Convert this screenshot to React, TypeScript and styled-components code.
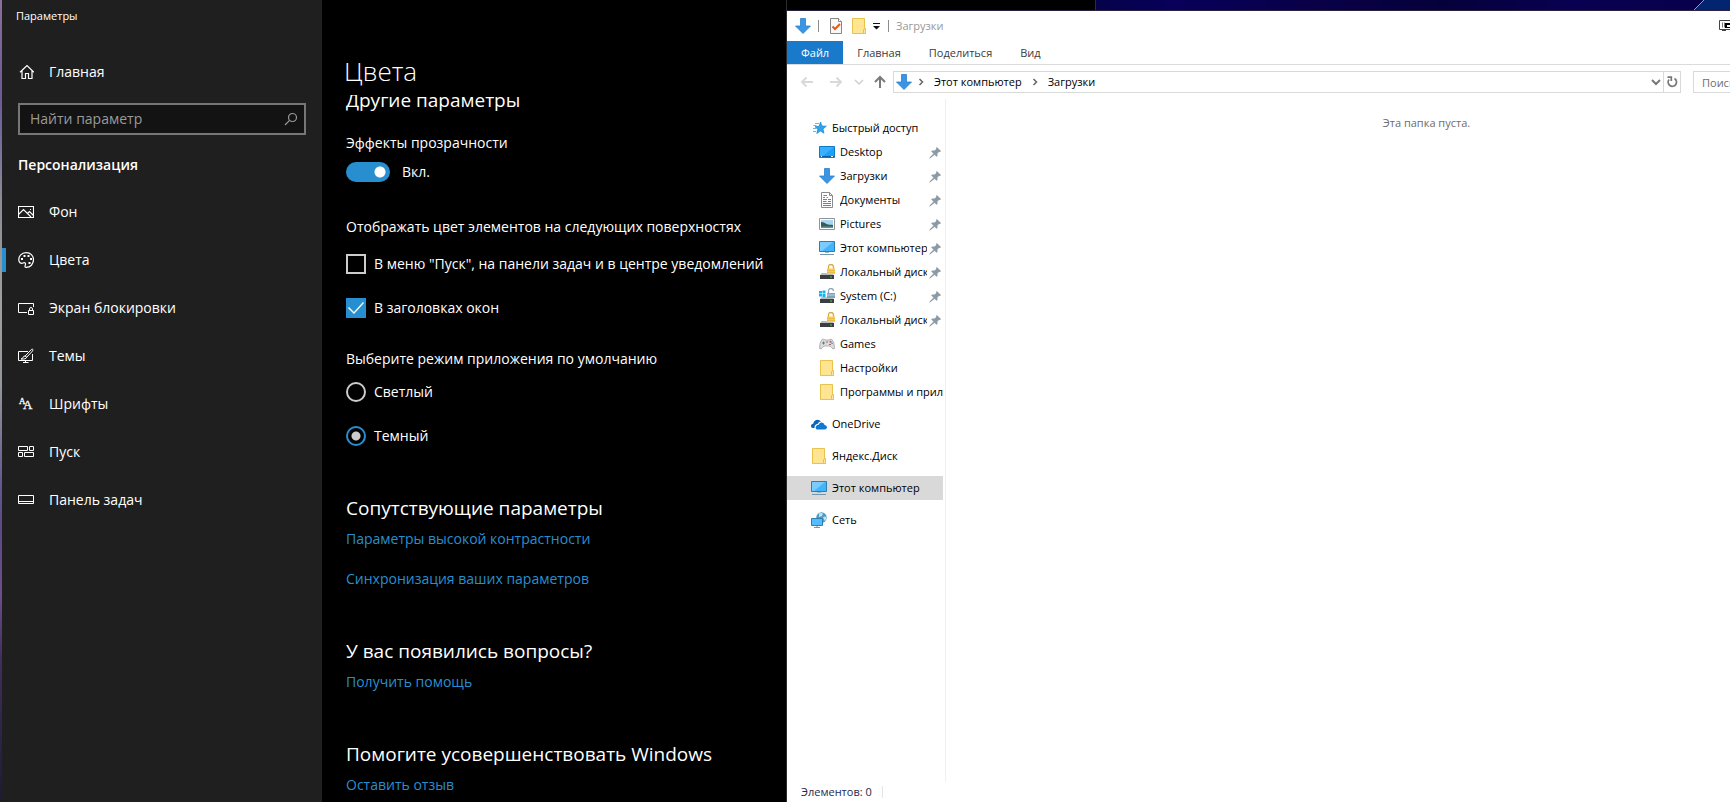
import React, { useState } from 'react';
import styled, { createGlobalStyle } from 'styled-components';

const accent = '#278fd0';

const GlobalStyle = createGlobalStyle`
  * { box-sizing: border-box; }
  body { margin: 0; overflow: hidden; background: #000; font-family: "Open Sans", "Noto Sans", sans-serif; }
  h1, h2, p, ul { margin: 0; padding: 0; font-weight: 400; }
  ul { list-style: none; }
  button, input { font: inherit; color: inherit; }
  button { border: 0; padding: 0; background: none; }
  svg { display: block; flex: none; }
`;

/* ---------- desktop ---------- */
const Desktop = styled.div`
  display: flex;
  height: 100vh;
  overflow: hidden;
`;
const WallpaperEdge = styled.div`
  flex: 0 0 2px;
  background: linear-gradient(#8a6f9c 0%, #6d5a94 12%, #77709c 18%, #8d8b93 25%, #a0a0a0 38%, #93979b 48%, #665a90 60%, #5a4a86 66%, #6e4f8e 74%, #40305c 82%, #1c1a33 100%);
`;
const RightSide = styled.div`
  flex: 1;
  min-width: 0;
  display: flex;
  flex-direction: column;
  overflow: hidden;
`;
const TopStrip = styled.div`
  flex: 0 0 10px;
  display: flex;
`;
const SettingsTop = styled.div`
  flex: 0 0 309px;
  background: #000;
  border-right: 1px solid #2b2b3b;
`;
const Wallpaper = styled.div`
  flex: 1;
  display: flex;
  justify-content: flex-end;
  background: linear-gradient(90deg, #04024a 0%, #08005a 12%, #090047 35%, #06003a 55%, #0a0052 75%, #08004a 100%);
`;

/* ---------- settings ---------- */
const Settings = styled.div`
  flex: 0 0 785px;
  display: flex;
  color: #fff;
  font-size: 14px;
  line-height: 20px;
`;
const Sidebar = styled.aside`
  flex: 0 0 320px;
  background: #1f1f1f;
`;
const WindowName = styled.p`
  padding: 6px 14px 0;
  font-size: 11px;
`;
const HomeLink = styled.a`
  display: flex;
  align-items: center;
  gap: 15px;
  height: 48px;
  margin-top: 22px;
  padding-left: 16px;
  color: inherit;
  text-decoration: none;
`;
const SearchBox = styled.label`
  display: flex;
  align-items: center;
  height: 32px;
  margin: 7px 16px 0;
  padding: 0 6px 0 10px;
  border: 2px solid #767676;
  background: #131313;
`;
const SearchInput = styled.input`
  flex: 1;
  min-width: 0;
  border: 0;
  padding: 0;
  outline: 0;
  background: none;
  &::placeholder { color: #9a9a9a; opacity: 1; }
`;
const Category = styled.h2`
  padding: 20px 16px 0;
  font-size: 14px;
  font-weight: 600;
`;
const NavList = styled.ul`
  padding-top: 13px;
`;
const NavLink = styled.a<{ $active?: boolean }>`
  display: flex;
  align-items: center;
  gap: 15px;
  height: 48px;
  padding-left: 16px;
  color: inherit;
  text-decoration: none;
  background: ${(p) => (p.$active ? `linear-gradient(${accent}, ${accent}) 0 12px / 4px 24px no-repeat` : 'none')};
`;
const Page = styled.main`
  flex: 1;
  min-width: 0;
  display: flex;
  flex-direction: column;
  background: #000;
  border-right: 1px solid #2b2b2b;
`;
const PageTitle = styled.h1`
  height: 95px;
  padding: 54px 22px 0;
  font-size: 26px;
  line-height: 34px;
  font-weight: 300;
`;
const ScrollArea = styled.div`
  flex: 1;
  min-height: 0;
  overflow: hidden;
`;
const Scrolled = styled.div`
  display: flex;
  flex-direction: column;
  gap: 50px;
  margin-top: -7px;
  padding-left: 24px;
`;
const Section = styled.section`
  display: flex;
  flex-direction: column;
  align-items: flex-start;
`;
const SectionTitle = styled.h2`
  font-size: 19px;
  line-height: 24px;
  white-space: nowrap;
`;
const Links = styled.div`
  display: flex;
  flex-direction: column;
  align-items: flex-start;
  gap: 20px;
  margin-top: 9px;
`;
const TextLink = styled.a`
  color: ${accent};
  text-decoration: none;
`;
const Caption = styled.p<{ $top: number }>`
  margin-top: ${(p) => p.$top}px;
  white-space: nowrap;
`;
const Options = styled.div<{ $top: number }>`
  display: flex;
  flex-direction: column;
  gap: 24px;
  margin-top: ${(p) => p.$top}px;
`;
const Option = styled.label<{ $gap?: number }>`
  display: flex;
  align-items: center;
  gap: ${(p) => p.$gap ?? 8}px;
  white-space: nowrap;
`;
const Toggle = styled.input`
  appearance: none;
  flex: none;
  width: 44px;
  height: 20px;
  margin: 0;
  border-radius: 10px;
  background: radial-gradient(circle at 34px 10px, #fff 5px, transparent 6px) ${accent};
  &:not(:checked) { background: radial-gradient(circle at 10px 10px, #fff 5px, transparent 6px) #333; }
`;
const CheckBox = styled.input`
  appearance: none;
  flex: none;
  display: grid;
  width: 20px;
  height: 20px;
  margin: 0;
  border: 2px solid #ccc;
  &:checked { border: 0; background: ${accent}; }
  &:checked::before {
    content: "";
    background: #fff;
    clip-path: polygon(2px 10px, 3px 9px, 8px 14px, 17px 4px, 18px 5px, 8px 16px);
  }
`;
const Radio = styled.input`
  appearance: none;
  flex: none;
  width: 20px;
  height: 20px;
  margin: 0;
  border: 2px solid #ccc;
  border-radius: 50%;
  &:checked {
    border-color: ${accent};
    background: radial-gradient(circle, #ccc 4px, transparent 5px);
  }
`;

/* ---------- explorer ---------- */
const Explorer = styled.div`
  flex: 1;
  min-height: 0;
  width: calc(100% + 177px);
  display: flex;
  flex-direction: column;
  border-top: 1px solid #2b2440;
  background: #fff;
  color: #000;
  font-size: 11px;
  line-height: 16px;
`;
const TitleBar = styled.header`
  display: flex;
  align-items: center;
  height: 30px;
  padding: 0 172px 0 8px;
`;
const Divider = styled.span`
  width: 1px;
  height: 12px;
  margin-left: 7px;
  background: #8c8c8c;
`;
const ToolButton = styled.button<{ $left: number }>`
  margin-left: ${(p) => p.$left}px;
`;
const ExplorerName = styled.h1`
  flex: 1;
  padding-left: 7px;
  font-size: 11px;
  line-height: 16px;
  color: #999;
`;
const Tabs = styled.nav`
  display: flex;
  height: 24px;
  border-bottom: 1px solid #dadbdc;
`;
const Tab = styled.button<{ $file?: boolean }>`
  padding: 0 14px;
  color: ${(p) => (p.$file ? '#fff' : '#3b3b3b')};
  background: ${(p) => (p.$file ? '#1979ca' : 'transparent')};
`;
const NavRow = styled.div`
  display: flex;
  align-items: center;
  height: 34px;
  padding: 0 12px;
`;
const NavButtons = styled.div`
  display: flex;
  align-items: center;
  width: 94px;
`;
const Address = styled.div`
  flex: 1;
  min-width: 0;
  display: flex;
  align-items: center;
  height: 22px;
  padding-left: 2px;
  border: 1px solid #d9d9d9;
`;
const Crumb = styled.button`
  padding: 0 8px;
`;
const AddressTools = styled.div`
  display: flex;
  align-items: center;
  align-self: stretch;
  margin-left: auto;
`;
const Refresh = styled.button`
  display: grid;
  place-items: center;
  width: 17px;
  height: 20px;
  margin-left: 2px;
  border-left: 1px solid #d9d9d9;
`;
const ExplorerSearch = styled.input`
  flex: 0 0 202px;
  height: 22px;
  margin-left: 12px;
  padding: 0 8px;
  border: 1px solid #d9d9d9;
  &::placeholder { color: #6d6d6d; opacity: 1; }
`;
const Body = styled.div`
  flex: 1;
  min-height: 0;
  display: flex;
`;
const Tree = styled.nav`
  flex: 0 0 159px;
  min-width: 0;
  display: flex;
  flex-direction: column;
  gap: 8px;
  padding: 17px 2px 0 0;
  border-right: 1px solid #f0f0f0;
`;
const TreeLink = styled.a<{ $level?: number; $selected?: boolean }>`
  display: flex;
  align-items: center;
  gap: 5px;
  height: 24px;
  padding-left: ${(p) => (p.$level ? 32 : 24)}px;
  color: inherit;
  text-decoration: none;
  background: ${(p) => (p.$selected ? '#d9d9d9' : 'transparent')};
`;
const TreeText = styled.span`
  flex: 1;
  min-width: 0;
  overflow: hidden;
  white-space: nowrap;
`;
const PinSlot = styled.span`
  flex: 0 0 16px;
  margin-left: -5px;
`;
const Files = styled.main`
  flex: 1;
  padding-top: 16px;
  text-align: center;
  color: #6d6d6d;
`;
const StatusBar = styled.footer`
  display: flex;
  align-items: center;
  gap: 10px;
  height: 20px;
  padding-left: 14px;
  color: #1e2a4a;
`;
const StatusDivider = styled.span`
  width: 1px;
  height: 12px;
  background: #e5e5e5;
`;

/* ---------- icons ---------- */
const Glyph: React.FC<{ children: React.ReactNode; size?: number }> = ({ children, size = 16 }) => (
  <svg width={size} height={size} viewBox="0 0 16 16" fill="none" stroke="#fff" aria-hidden="true">{children}</svg>
);
const HomeIcon = () => (
  <Glyph><path d="M2 8.300 9 1.500l7 6.800M4 6.800V14.500h3.500V9.500h3V14.500H14V6.800" strokeWidth="1.2" /></Glyph>
);
const ImageIcon = () => (
  <Glyph><path d="M.5 2.500h15v11H.5zM1 10l4.500-4.500 7.500 7.500M9.500 9.500l2-2 4 4" strokeWidth="1.100" /><path d="M12 5h1v1h-1z" fill="#fff" stroke="none" /></Glyph>
);
const PaletteIcon = () => (
  <Glyph>
    <path d="M1 9.200C-.1 4.200 3.600.6 8.200.6c4.200 0 7.300 3 7.300 7 0 4.600-3.100 7.800-7.300 7.800-1.600 0-1.300-1.300-.9-2.300.5-1.400.1-2.500-1.200-2.500-.9 0-1.200.7-2.100.7C2.500 11.300 1.300 10.500 1 9.200z" strokeWidth="1.200" />
    <path d="M3 6h2v2H3zM5.500 3h2v2h-2zM9.500 3h2v2h-2zM12 6h2v2h-2zM10.500 10h2v2h-2z" fill="#fff" stroke="none" />
  </Glyph>
);
const LockScreenIcon = () => (
  <Glyph><path d="M9 12.500H.5v-9h15V7M10.500 10.500h5v4h-5zM11.500 10.500V9q0-1.500 1.500-1.500t1.500 1.500v1.500" /></Glyph>
);
const ThemesIcon = () => (
  <Glyph><path d="M10 3.500H.5v9h14V6M7.500 12.500v2M5 14.500h5.500" /><path d="M7.200 8 13.500 1.400q1-.6 1.300 0t-.2 1.500L8.700 9.300zM7.200 8 8.700 9.300Q8 11.500 3 11q2-.6 2.200-1.800T7.200 8z" /></Glyph>
);
const FontsIcon = () => (
  <Glyph><g fill="#fff" strokeWidth=".3" fontFamily="Liberation Serif"><text x="1" y="8" fontSize="9">A</text><text x="5" y="13" fontSize="13">A</text></g></Glyph>
);
const StartIcon = () => (
  <Glyph><path d="M.5 2.500h9v4h-9zM11.500 2.500h4v4h-4zM.5 8.500h4v4h-4zM6.500 8.500h9v4h-9z" /></Glyph>
);
const TaskbarIcon = () => (
  <Glyph><path d="M.5 3.500h15v8H.5zM0 9.500h16" /></Glyph>
);
const SearchIcon = () => (
  <svg width="14" height="14" viewBox="0 0 14 14" fill="none" stroke="#9a9a9a" strokeWidth="1.200" aria-hidden="true"><circle cx="8.500" cy="5.500" r="4" /><path d="M5.600 8.400 1 13" /></svg>
);
const Art: React.FC<{ children: React.ReactNode }> = ({ children }) => (
  <svg width="16" height="16" viewBox="0 0 16 16" aria-hidden="true">{children}</svg>
);
const DownloadIcon = () => (
  <Art><path d="M5.500.5h5V8h5L8 15.500.5 8h5z" fill="#3a96e4" stroke="#2b80cc" strokeWidth=".8" /></Art>
);
const FolderIcon = () => (
  <Art><path d="M1.500.5h12v10h1v5h-13z" fill="#ffe592" stroke="#e8c34c" /><path d="M12.500 15.500v-4l2-1v5z" fill="#ffe9a0" stroke="#e8c34c" /></Art>
);
const PropertiesIcon = () => (
  <Art><path d="M2.500.5h8l3 3v12h-11z" fill="#f7f8f8" stroke="#858585" /><path d="M10.500.5v3h3" fill="#fff" stroke="#858585" /><path d="m4.500 8.500 2.500 2.500 5-5" fill="none" stroke="#e8591c" strokeWidth="2" /></Art>
);
const StarIcon = () => (
  <Art><path d="m9.500 2 1.500 4 4.300.2-3.300 2.700 1 4.300-3.600-2.200L5.800 13.500l1-4.300L4 6.700l4.100-.4z" fill="#2fa4ee" stroke="#1686d0" strokeWidth=".7" /><path d="M4 3.500h4M2.500 5.500h3M2 8.500h3.500M2 11.500h3" stroke="#63b9ec" /></Art>
);
const DesktopIcon = () => (
  <Art><path d="M.5 2.500h15v11H.5z" fill="#18a0fb" stroke="#0f7ac4" /><path d="M1 3h14L4 12H1z" fill="#38b0ff" /><path d="M1 12h14v1H1z" fill="#0b5e9e" /><path d="M2 12h1v1H2zM12 12h2v1h-2z" fill="#fff" /></Art>
);
const DocumentIcon = () => (
  <Art><path d="M2.500.5h8l3 3v12h-11z" fill="#fff" stroke="#8a8a8a" /><path d="M10.500.5v3h3" fill="none" stroke="#8a8a8a" /><path d="M4 5.500h2M7.500 5.500H9M4 7.500h4M9 7.500h3M4 9.500h3.500M9 9.500h3M4 11.500h8M4 13.500h8M4.500 3.500H8" stroke="#3c8fd0" /></Art>
);
const PicturesIcon = () => (
  <Art><path d="M.5 2.500h15v11H.5z" fill="#fff" stroke="#929292" /><path d="M2 4h12v8H2z" fill="#a9d5f5" /><path d="M2 6c3 0 5 2 7 2.500s3 0 5 .5v2H2z" fill="#335f50" /><path d="M2 10.500h12V12H2z" fill="#5d8fb5" /></Art>
);
const ComputerIcon = () => (
  <Art><path d="M.5 1.500h15v10H.5z" fill="#45b4fb" stroke="#2c7fae" /><path d="M1 2h13L3 11H1z" fill="#7accff" /><path d="M6 12.500h4" stroke="#9fb6c6" /><path d="M1 14.500h14" stroke="#7595a9" /></Art>
);
const Drive = () => (
  <><path d="M2.500 9h11L15 11.500H1z" fill="#b9bcbe" /><path d="M1 11h14v4H1z" fill="#3b3e40" /><path d="M11 12.500h2v1h-2z" fill="#31e03a" /></>
);
const LockedDriveIcon = () => (
  <Art><Drive /><path d="M9.500 5V3q0-2.500 2.500-2.500T14.500 3v2" fill="none" stroke="#d7a93c" strokeWidth="1.300" /><path d="M8 4.500h8v5.500H8z" fill="#f7cc57" /><path d="M8 6.500h8M8 8.500h8" stroke="#e5b03b" strokeWidth=".6" /></Art>
);
const SystemDriveIcon = () => (
  <Art><Drive /><path d="M0 3h3v2.500H0zM3.500 2.500H6.500v3H3.500zM0 6h3v2.500H0zM3.500 6H6.500v3H3.500z" fill="#14b4f0" /><path d="M9.500 5V3q0-2.500 2.500-2.500T14.500 3" fill="none" stroke="#8fa6b5" strokeWidth="1.300" /><path d="M8 5h8v5H8z" fill="#7fa3ba" /><path d="M8 7h8" stroke="#bdd3e0" /></Art>
);
const GamepadIcon = () => (
  <Art><path d="M3 3.500q2-.8 3 .5h4q1-1.300 3-.5 2.500 2.500 2.500 9-1.500 1.500-3-1l-1.500-1.500H5l-1.500 1.500q-1.500 2.500-3 1Q.5 6 3 3.500z" fill="#dcdcdc" stroke="#a3a3a3" strokeWidth=".8" /><path d="M4.500 5.500v3M3 7h3M10 8.500h2" stroke="#777" /><circle cx="11.500" cy="5.800" r="1" fill="#c0564c" /><circle cx="13" cy="7.300" r=".8" fill="#587cae" /><circle cx="8" cy="6" r=".8" fill="#6b6b6b" /></Art>
);
const OneDriveIcon = () => (
  <Art><path d="M5.500 13.500Q4 12 5 10.200 6 8.800 7.600 8.800 8.500 6.500 10.800 6.600q2.200.2 2.800 2.300 2.400.3 2.400 2.400 0 2-2 2.200z" fill="#0f78d4" /><path d="M1.800 12Q-.3 11.700 0 9.600q.4-1.800 2.200-1.900Q2.400 5 5 4q3-1 5 1.600-2.400.1-3.200 2.200-2.300.3-3 2Q3.300 11 3.700 12z" fill="#0b64b8" /></Art>
);
const NetworkIcon = () => (
  <Art><circle cx="10.500" cy="5.500" r="5.200" fill="#4a9cc4" /><path d="M8 1.500q2-1 4 0l-1 2.500-3 1zM12 5l3.500-.5q0 3-2 4.500z" fill="#c4e6f2" /><path d="M.5 6.500h11v7H.5z" fill="#55bdff" stroke="#2c7fae" /><path d="M3 15.500h6M6 14v1" stroke="#7595a9" /></Art>
);
const PinIcon = () => (
  <Art><path d="m9.800 3 4.400 4.300-1.200.5-1 .1-1.600 1.700.1 2.300-1 .9-2-2L3 14.500l-.6.100.3-1 3.800-4-2.300-2 1-1h2.400L9.200 5V3.700z" fill="#8b9aa5" /></Art>
);
const Chevron: React.FC<{ down?: boolean; color: string; width?: number }> = ({ down, color, width = 1.5 }) => (
  <svg width="10" height="10" viewBox="0 0 10 10" fill="none" stroke={color} strokeWidth={width} aria-hidden="true">
    <path d={down ? 'm1 3 4 4 4-4' : 'm3.500 2 3 3-3 3'} />
  </svg>
);
const ArrowIcon: React.FC<{ dir: 'left' | 'right' | 'up' }> = ({ dir }) => {
  const paths = {
    left: 'M14 8H3M7.500 3.500 3 8l4.500 4.500',
    right: 'M2 8h11M8.500 3.500 13 8l-4.500 4.500',
    up: 'M8 14V3M3 8l5-5 5 5',
  };
  return (
    <svg width="16" height="16" viewBox="0 0 16 16" fill="none" stroke={dir === 'up' ? '#7a7a7a' : '#d9d9d9'} strokeWidth={2} aria-hidden="true"><path d={paths[dir]} /></svg>
  );
};
const RefreshIcon = () => (
  <svg width="12" height="12" viewBox="0 0 12 12" fill="none" stroke="#777" strokeWidth="1.700" aria-hidden="true"><path d="M8.500 2.500A4.200 4.200 0 1 1 3 3.500M1.500 1.200h3.800V5" /></svg>
);
const OverflowIcon = () => (
  <svg width="8" height="8" viewBox="0 0 8 8" aria-hidden="true"><path d="M0 1h7v1H0zM0 4h7L3.500 7.500z" fill="#111" /></svg>
);
const DisplayIcon = () => (
  <Art><path d="M.5 2.500h13v9H.5z" fill="#fff" stroke="#444" /><path d="M3.500 4.500v5M5.500 4.500v5" stroke="#777" /><path d="M3 12.500h4" stroke="#444" /><path d="M6 5h9v5H6z" fill="#000" /><path d="M8 7h5v2H8z" fill="#fff" /></Art>
);

const sections = [
  { label: 'Фон', icon: <ImageIcon /> },
  { label: 'Цвета', icon: <PaletteIcon />, active: true },
  { label: 'Экран блокировки', icon: <LockScreenIcon /> },
  { label: 'Темы', icon: <ThemesIcon /> },
  { label: 'Шрифты', icon: <FontsIcon /> },
  { label: 'Пуск', icon: <StartIcon /> },
  { label: 'Панель задач', icon: <TaskbarIcon /> },
];

const quickAccess = [
  { label: 'Desktop', icon: <DesktopIcon />, pinned: true },
  { label: 'Загрузки', icon: <DownloadIcon />, pinned: true },
  { label: 'Документы', icon: <DocumentIcon />, pinned: true },
  { label: 'Pictures', icon: <PicturesIcon />, pinned: true },
  { label: 'Этот компьютер', icon: <ComputerIcon />, pinned: true },
  { label: 'Локальный диск', icon: <LockedDriveIcon />, pinned: true },
  { label: 'System (C:)', icon: <SystemDriveIcon />, pinned: true },
  { label: 'Локальный диск', icon: <LockedDriveIcon />, pinned: true },
  { label: 'Games', icon: <GamepadIcon /> },
  { label: 'Настройки', icon: <FolderIcon /> },
  { label: 'Программы и приложения', icon: <FolderIcon /> },
];

const places = [
  { label: 'OneDrive', icon: <OneDriveIcon /> },
  { label: 'Яндекс.Диск', icon: <FolderIcon /> },
  { label: 'Этот компьютер', icon: <ComputerIcon />, selected: true },
  { label: 'Сеть', icon: <NetworkIcon /> },
];

function SettingsWindow() {
  const [transparency, setTransparency] = useState(true);
  const [mode, setMode] = useState('dark');
  return (
    <Settings>
      <Sidebar>
        <WindowName>Параметры</WindowName>
        <HomeLink href="#home"><HomeIcon />Главная</HomeLink>
        <SearchBox>
          <SearchInput type="text" placeholder="Найти параметр" aria-label="Найти параметр" />
          <SearchIcon />
        </SearchBox>
        <Category>Персонализация</Category>
        <NavList>
          {sections.map((s) => (
            <li key={s.label}><NavLink href="#section" $active={s.active}>{s.icon}{s.label}</NavLink></li>
          ))}
        </NavList>
      </Sidebar>
      <Page>
        <PageTitle>Цвета</PageTitle>
        <ScrollArea>
          <Scrolled>
            <Section>
              <SectionTitle>Другие параметры</SectionTitle>
              <Caption $top={21}>Эффекты прозрачности</Caption>
              <Options $top={9}>
                <Option $gap={12}>
                  <Toggle type="checkbox" role="switch" checked={transparency} onChange={() => setTransparency(!transparency)} />
                  {transparency ? 'Вкл.' : 'Откл.'}
                </Option>
              </Options>
              <Caption $top={35}>Отображать цвет элементов на следующих поверхностях</Caption>
              <Options $top={17}>
                <Option><CheckBox type="checkbox" />В меню "Пуск", на панели задач и в центре уведомлений</Option>
                <Option><CheckBox type="checkbox" defaultChecked />В заголовках окон</Option>
              </Options>
              <Caption $top={31}>Выберите режим приложения по умолчанию</Caption>
              <Options $top={13}>
                <Option><Radio type="radio" name="mode" checked={mode === 'light'} onChange={() => setMode('light')} />Светлый</Option>
                <Option><Radio type="radio" name="mode" checked={mode === 'dark'} onChange={() => setMode('dark')} />Темный</Option>
              </Options>
            </Section>
            <Section>
              <SectionTitle>Сопутствующие параметры</SectionTitle>
              <Links>
                <TextLink href="#contrast">Параметры высокой контрастности</TextLink>
                <TextLink href="#sync">Синхронизация ваших параметров</TextLink>
              </Links>
            </Section>
            <Section>
              <SectionTitle>У вас появились вопросы?</SectionTitle>
              <Links><TextLink href="#help">Получить помощь</TextLink></Links>
            </Section>
            <Section>
              <SectionTitle>Помогите усовершенствовать Windows</SectionTitle>
              <Links><TextLink href="#feedback">Оставить отзыв</TextLink></Links>
            </Section>
          </Scrolled>
        </ScrollArea>
      </Page>
    </Settings>
  );
}

function ExplorerWindow() {
  return (
    <Explorer>
      <TitleBar>
        <DownloadIcon />
        <Divider />
        <ToolButton $left={9} aria-label="Свойства"><PropertiesIcon /></ToolButton>
        <ToolButton $left={7} aria-label="Новая папка"><FolderIcon /></ToolButton>
        <ToolButton $left={6} aria-label="Настройка панели"><OverflowIcon /></ToolButton>
        <Divider />
        <ExplorerName>Загрузки</ExplorerName>
        <DisplayIcon />
      </TitleBar>
      <Tabs>
        <Tab $file>Файл</Tab>
        <Tab>Главная</Tab>
        <Tab>Поделиться</Tab>
        <Tab>Вид</Tab>
      </Tabs>
      <NavRow>
        <NavButtons>
          <ToolButton $left={0} aria-label="Назад"><ArrowIcon dir="left" /></ToolButton>
          <ToolButton $left={13} aria-label="Вперед"><ArrowIcon dir="right" /></ToolButton>
          <ToolButton $left={10} aria-label="Последние расположения"><Chevron down color="#d0d0d0" /></ToolButton>
          <ToolButton $left={8} aria-label="Вверх"><ArrowIcon dir="up" /></ToolButton>
        </NavButtons>
        <Address>
          <DownloadIcon />
          <ToolButton $left={4} aria-label="Расположения"><Chevron color="#666" /></ToolButton>
          <Crumb>Этот компьютер</Crumb>
          <Chevron color="#666" />
          <Crumb>Загрузки</Crumb>
          <AddressTools>
            <ToolButton $left={0} aria-label="История"><Chevron down color="#777" width={2} /></ToolButton>
            <Refresh aria-label="Обновить"><RefreshIcon /></Refresh>
          </AddressTools>
        </Address>
        <ExplorerSearch type="text" placeholder="Поиск: Загрузки" aria-label="Поиск" />
      </NavRow>
      <Body>
        <Tree>
          <ul>
            <li><TreeLink href="#quick"><StarIcon /><TreeText>Быстрый доступ</TreeText></TreeLink></li>
            {quickAccess.map((item, i) => (
              <li key={i}>
                <TreeLink href="#item" $level={1}>
                  {item.icon}<TreeText>{item.label}</TreeText>{item.pinned && <PinSlot><PinIcon /></PinSlot>}
                </TreeLink>
              </li>
            ))}
          </ul>
          {places.map((item) => (
            <TreeLink key={item.label} href="#place" $selected={item.selected}>{item.icon}<TreeText>{item.label}</TreeText></TreeLink>
          ))}
        </Tree>
        <Files><p>Эта папка пуста.</p></Files>
      </Body>
      <StatusBar>Элементов: 0<StatusDivider /></StatusBar>
    </Explorer>
  );
}

export default function App() {
  return (
    <>
      <GlobalStyle />
      <Desktop>
        <WallpaperEdge />
        <SettingsWindow />
        <RightSide>
          <TopStrip>
            <SettingsTop />
            <Wallpaper>
              <svg width="36" height="10" viewBox="0 0 36 10" aria-hidden="true"><path d="M0 10 10 0h26v10z" fill="#03246f" /><path d="M0 10 10 0" stroke="#19d3e8" /></svg>
            </Wallpaper>
          </TopStrip>
          <ExplorerWindow />
        </RightSide>
      </Desktop>
    </>
  );
}
